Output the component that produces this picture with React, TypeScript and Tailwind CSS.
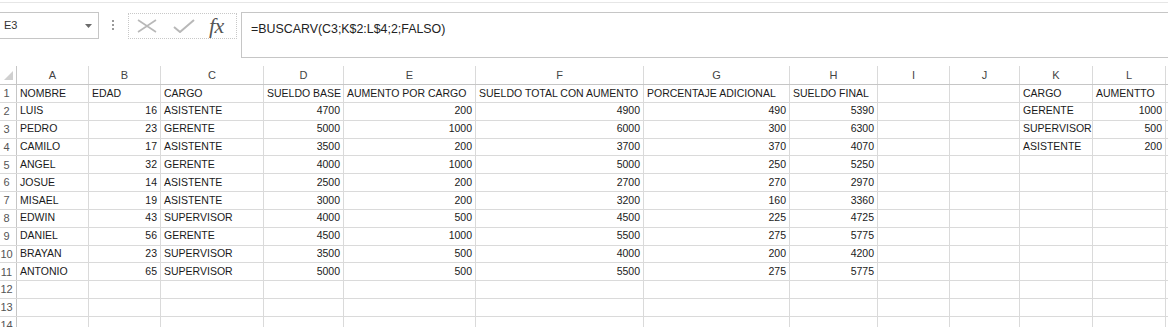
import React from "react";

const widths = [72, 72, 103, 80, 132, 168, 146, 88, 72, 70, 73, 73, 40];
const letters = ["A", "B", "C", "D", "E", "F", "G", "H", "I", "J", "K", "L", ""];

type Cell = string | number;
const data: Cell[][] = [
  ["NOMBRE", "EDAD", "CARGO", "SUELDO BASE", "AUMENTO POR CARGO", "SUELDO TOTAL CON AUMENTO", "PORCENTAJE ADICIONAL", "SUELDO FINAL", "", "", "CARGO", "AUMENTTO"],
  ["LUIS", 16, "ASISTENTE", 4700, 200, 4900, 490, 5390, "", "", "GERENTE", 1000],
  ["PEDRO", 23, "GERENTE", 5000, 1000, 6000, 300, 6300, "", "", "SUPERVISOR", 500],
  ["CAMILO", 17, "ASISTENTE", 3500, 200, 3700, 370, 4070, "", "", "ASISTENTE", 200],
  ["ANGEL", 32, "GERENTE", 4000, 1000, 5000, 250, 5250],
  ["JOSUE", 14, "ASISTENTE", 2500, 200, 2700, 270, 2970],
  ["MISAEL", 19, "ASISTENTE", 3000, 200, 3200, 160, 3360],
  ["EDWIN", 43, "SUPERVISOR", 4000, 500, 4500, 225, 4725],
  ["DANIEL", 56, "GERENTE", 4500, 1000, 5500, 275, 5775],
  ["BRAYAN", 23, "SUPERVISOR", 3500, 500, 4000, 200, 4200],
  ["ANTONIO", 65, "SUPERVISOR", 5000, 500, 5500, 275, 5775],
  [],
  [],
  [],
];

export default function App() {
  return (
    <div className="w-[1168px] h-[327px] overflow-hidden bg-white font-['Liberation_Sans',Arial,sans-serif] text-[#1a1a1a]">
      <div className="h-[2px]" />
      <div className="h-px bg-[#e6e6e6]" />
      {/* toolbar */}
      <div className="flex items-start mt-[9px]">
        <div className="w-[99px] h-[27px] border border-l-0 border-[#c6c6c6] flex items-center justify-between pl-[4px] pr-[6px]">
          <span className="text-[11px] text-[#333]">E3</span>
          <svg width="7" height="4" viewBox="0 0 7 4">
            <path d="M0 0 L7 0 L3.5 4 Z" fill="#6b6b6b" />
          </svg>
        </div>
        <div className="ml-[13px] mt-[8px] flex flex-col gap-[2px]">
          <div className="w-[2px] h-[2px] bg-[#9a9a9a]" />
          <div className="w-[2px] h-[2px] bg-[#9a9a9a]" />
          <div className="w-[2px] h-[2px] bg-[#9a9a9a]" />
        </div>
        <div className="ml-[14px] mt-px w-[109px] h-[26px] border border-dotted border-[#c8c8c8] flex items-center pl-[6px]">
          <svg width="22" height="14" viewBox="0 0 22 14" className="ml-px">
            <path d="M2 1 L20 13 M20 1 L2 13" stroke="#b8b8b8" strokeWidth="1.6" fill="none" />
          </svg>
          <svg width="22" height="14" viewBox="0 0 22 14" className="ml-[15px]">
            <path d="M1 8 L7 13 L21 1" stroke="#b8b8b8" strokeWidth="2" fill="none" />
          </svg>
          <span className="ml-[14px] font-['Liberation_Serif',serif] italic text-[22px] leading-none text-[#555] tracking-[-0.5px]">fx</span>
        </div>
        <div className="ml-[4px] flex-1 h-[46px] border border-r-0 border-[#c6c6c6] pl-[9px] pt-[3px]">
          <span className="text-[12.4px] text-[#222]">=BUSCARV(C3;K$2:L$4;2;FALSO)</span>
        </div>
      </div>
      {/* grid */}
      <div className="mt-[8px]">
        <div className="flex h-[19px] border-b border-[#c6c6c6]">
          <div className="w-[17px] shrink-0 border-r border-[#c6c6c6] flex items-end justify-end pr-[3px] pb-[4px]">
            <svg width="9" height="9" viewBox="0 0 9 9">
              <path d="M9 0 L9 9 L0 9 Z" fill="#d0d0d0" />
            </svg>
          </div>
          {letters.map((l, i) => (
            <div
              key={i}
              style={{ width: widths[i] }}
              className="shrink-0 border-r border-[#dadada] flex items-center justify-center text-[11px] text-[#444]"
            >
              {l}
            </div>
          ))}
        </div>
        {data.map((row, r) => (
          <div key={r} className="flex h-[17.85px] border-b border-[#dadada]">
            <div className="w-[17px] shrink-0 border-r border-[#c6c6c6] flex items-center justify-center pr-[3px] text-[11px] text-[#555]">
              {r + 1}
            </div>
            {widths.map((w, c) => {
              const v = row[c];
              const num = typeof v === "number";
              return (
                <div
                  key={c}
                  style={{ width: w }}
                  className={
                    "shrink-0 border-r border-[#dadada] flex items-center text-[10.5px] whitespace-nowrap overflow-hidden " +
                    (num ? "justify-end pr-[3px]" : "justify-start pl-[3px]")
                  }
                >
                  {v === undefined ? "" : String(v)}
                </div>
              );
            })}
          </div>
        ))}
      </div>
    </div>
  );
}
